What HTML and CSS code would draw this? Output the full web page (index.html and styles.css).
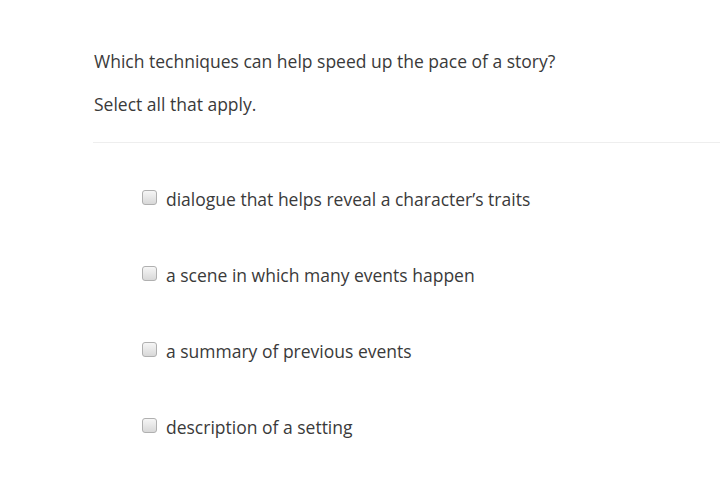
FILE: index.html
```html
<!DOCTYPE html>
<html>
<head>
<meta charset="utf-8">
<link rel="stylesheet" href="styles.css">
</head>
<body>
<div class="question">
  <p class="prompt">Which techniques can help speed up the pace of a story?</p>
  <p class="instr">Select all that apply.</p>
</div>
<ul class="options">
  <li class="option"><span class="box"></span><span class="label">dialogue that helps reveal a character’s traits</span></li>
  <li class="option"><span class="box"></span><span class="label">a scene in which many events happen</span></li>
  <li class="option"><span class="box"></span><span class="label">a summary of previous events</span></li>
  <li class="option"><span class="box"></span><span class="label">description of a setting</span></li>
</ul>
</body>
</html>
```
FILE: styles.css
```css
html, body {
  margin: 0;
  padding: 0;
  background: #fff;
}
body {
  font-family: "Open Sans", "Liberation Sans", sans-serif;
  font-size: 17.5px;
  color: #3a3a3a;
  width: 720px;
  height: 484px;
  overflow: hidden;
}
.question {
  margin-left: 93px;
  padding-left: 1px;
  padding-top: 48px;
  padding-bottom: 25px;
  border-bottom: 1px solid #eee;
}
.prompt, .instr {
  margin: 0;
  line-height: 26px;
}
.instr {
  margin-top: 17px;
}
.options {
  list-style: none;
  margin: 0;
  padding: 43px 0 0 142px;
  display: flex;
  flex-direction: column;
  gap: 50px;
}
.option {
  display: flex;
  align-items: center;
  height: 26px;
  gap: 9px;
}
.box {
  width: 15px;
  height: 15px;
  border: 1px solid #b0b0b0;
  border-radius: 3px;
  background: linear-gradient(#f6f6f6, #d8d8d8);
  box-sizing: border-box;
  flex: none;
  margin-top: -3px;
}
.label {
  line-height: 26px;
}
```
